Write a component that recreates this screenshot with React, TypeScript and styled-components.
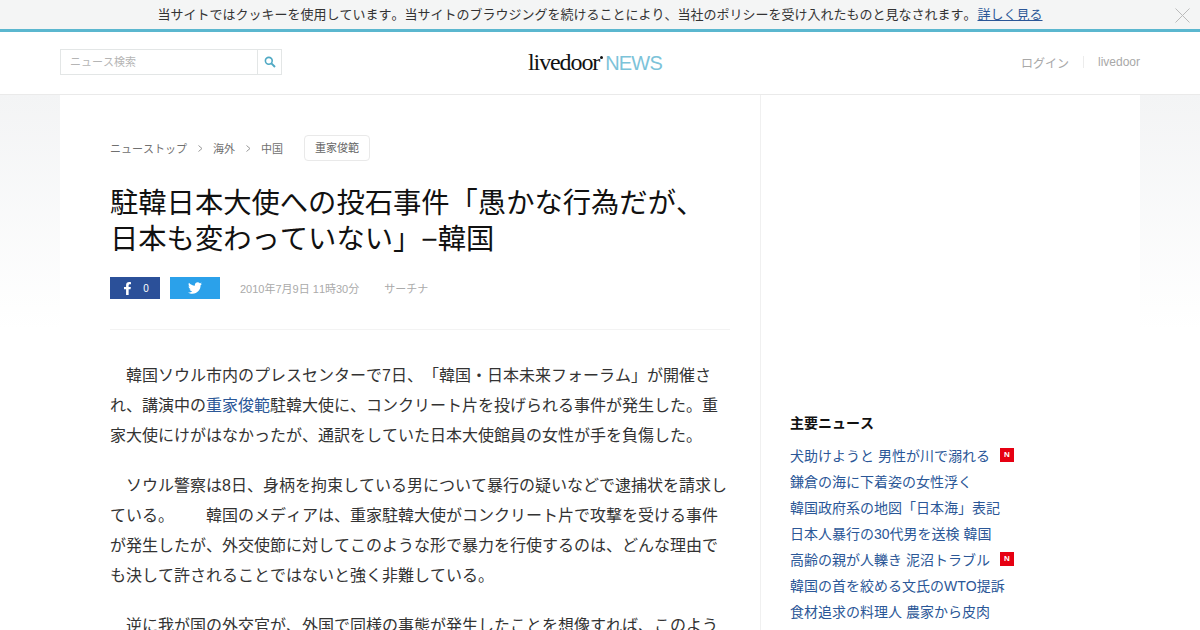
import { createGlobalStyle, styled } from "styled-components";
import { FaFacebookF, FaTwitter } from "react-icons/fa";

const GlobalStyle = createGlobalStyle`
  html, body { margin: 0; padding: 0; height: 630px; overflow: hidden; background: #fff; }
  body {
    font-family: "Liberation Sans", "Noto Sans CJK JP", sans-serif;
    color: #333;
    text-spacing-trim: space-all;
    font-kerning: none;
  }
  a { text-decoration: none; }
`;

const CookieBar = styled.div`
  height: 29px;
  box-sizing: content-box;
  background: #f4f5f5;
  border-bottom: 3px solid #5bb7cf;
  display: flex;
  align-items: center;
  justify-content: center;
  padding-bottom: 0;
  position: relative;
  font-size: 13px;
  line-height: 28px;
  color: #333;
`;

const CookieLink = styled.a`
  color: #2b5797;
  text-decoration: underline;
  margin-left: 1px;
`;

const CloseIcon = styled.svg`
  position: absolute;
  right: 10px;
  top: 8px;
  width: 15px;
  height: 15px;
`;

const Header = styled.header`
  height: 63px;
  box-sizing: border-box;
  border-bottom: 1px solid #eaeaea;
  padding: 0 60px 2px;
  display: grid;
  grid-template-columns: 1fr auto 1fr;
  align-items: center;
  background: #fff;
`;

const SearchBox = styled.div`
  width: 222px;
  height: 26px;
  box-sizing: border-box;
  border: 1px solid #e3e6e6;
  display: flex;
`;

const SearchInput = styled.div`
  flex: 1;
  padding-left: 9px;
  font-size: 11px;
  line-height: 25px;
  color: #b5b5b5;
`;

const SearchButton = styled.div`
  width: 23px;
  border-left: 1px solid #e3e6e6;
  display: flex;
  align-items: center;
  justify-content: center;
`;

const Logo = styled.div`
  display: flex;
  align-items: baseline;
  height: 28px;
  line-height: 28px;
  margin-left: -10px;
`;

const LogoMain = styled.span`
  font-family: "Liberation Serif", serif;
  font-size: 24px;
  letter-spacing: -1.1px;
  color: #111;
`;

const LogoDot = styled.span`
  width: 3px;
  height: 3px;
  border-radius: 50%;
  background: #111;
  align-self: flex-start;
  margin: 8px 2px 0 1px;
`;

const LogoNews = styled.span`
  font-family: "Liberation Sans", sans-serif;
  font-size: 20px;
  letter-spacing: -0.8px;
  color: #7cc3d9;
`;

const HeaderNav = styled.nav`
  display: flex;
  justify-content: flex-end;
  align-items: center;
  font-size: 12px;
  color: #a8a8a8;
`;

const NavItem = styled.a<{ $divided?: boolean }>`
  color: #a8a8a8;
  ${(p) =>
    p.$divided
      ? "margin-left: 14px; padding-left: 14px; border-left: 1px solid #ececec; line-height: 12px;"
      : ""}
`;

const Backdrop = styled.div`
  height: 538px;
  background: linear-gradient(#f3f4f5 0, #fff 235px);
  overflow: hidden;
`;

const Page = styled.div`
  width: 1080px;
  margin: 0 auto;
  background: #fff;
  display: flex;
  height: 100%;
`;

const Article = styled.article`
  width: 701px;
  box-sizing: border-box;
  border-right: 1px solid #f0f0f0;
  padding: 40px 30px 0 50px;
  flex: none;
`;

const Breadcrumb = styled.div`
  display: flex;
  align-items: center;
  height: 26px;
  font-size: 11px;
  color: #707070;
`;

const Chevron = styled.svg`
  width: 5px;
  height: 7px;
  margin: 0 10px 0 11px;
`;

const TagPill = styled.span`
  margin-left: 21px;
  height: 26px;
  box-sizing: border-box;
  border: 1px solid #e9e9e9;
  border-radius: 4px;
  padding: 0 10px;
  line-height: 24px;
  color: #666;
`;

const Title = styled.h1`
  margin: 24px 0 0;
  font-size: 28.3px;
  font-weight: 400;
  line-height: 36px;
  color: #111;
`;

const MetaRow = styled.div`
  display: flex;
  align-items: center;
  margin-top: 20px;
  height: 22px;
  padding-bottom: 30px;
  border-bottom: 1px solid #f3f3f3;
  font-size: 11px;
  color: #aaa;
`;

const ShareButton = styled.a<{ $bg: string }>`
  width: 50px;
  height: 22px;
  background: ${(p) => p.$bg};
  color: #fff;
  display: flex;
  align-items: center;
  justify-content: center;
  margin-right: 10px;
  font-size: 10px;
  gap: 9px;
`;

const MetaDate = styled.span`
  margin-left: 10px;
`;

const MetaSource = styled.span`
  margin-left: 25px;
`;

const Body = styled.div`
  margin-top: 31px;
  padding-right: 3px;
  font-size: 16px;
  line-height: 30px;
  color: #333;
`;

const Paragraph = styled.p`
  margin: 0 0 20px;
  text-indent: 16px;
`;

const BodyLink = styled.a`
  color: #2b5797;
`;

const Side = styled.aside`
  padding: 316px 0 0 29px;
  flex: 1;
`;

const SideTitle = styled.h2`
  margin: 0 0 7px;
  font-size: 14px;
  line-height: 24px;
  font-weight: 700;
  color: #111;
`;

const NewsList = styled.ul`
  margin: 0;
  padding: 0;
  list-style: none;
`;

const NewsItem = styled.li`
  height: 26px;
  display: flex;
  align-items: center;
  font-size: 14px;
  color: #2b5797;
`;

const NewBadge = styled.span`
  width: 14px;
  height: 14px;
  margin-left: 10px;
  margin-top: -1px;
  background: #e60012;
  color: #fff;
  font-size: 8px;
  font-weight: 700;
  line-height: 14px;
  text-align: center;
`;

const news = [
  { text: "犬助けようと 男性が川で溺れる", isNew: true },
  { text: "鎌倉の海に下着姿の女性浮く" },
  { text: "韓国政府系の地図「日本海」表記" },
  { text: "日本人暴行の30代男を送検 韓国" },
  { text: "高齢の親が人轢き 泥沼トラブル", isNew: true },
  { text: "韓国の首を絞める文氏のWTO提訴" },
  { text: "食材追求の料理人 農家から皮肉" },
];

export default function App() {
  return (
    <>
      <GlobalStyle />
      <CookieBar>
        <span>
          当サイトではクッキーを使用しています。当サイトのブラウジングを続けることにより、当社のポリシーを受け入れたものと見なされます。
        </span>
        <CookieLink href="#">詳しく見る</CookieLink>
        <CloseIcon viewBox="0 0 15 15">
          <path d="M0.5 0.5L14.5 14.5M14.5 0.5L0.5 14.5" stroke="#bbb" strokeWidth="1" fill="none" />
        </CloseIcon>
      </CookieBar>
      <Header>
        <SearchBox>
          <SearchInput>ニュース検索</SearchInput>
          <SearchButton>
            <svg width="12" height="12" viewBox="0 0 12 12">
              <circle cx="4.8" cy="4.8" r="3.4" stroke="#4fa9c4" strokeWidth="1.6" fill="none" />
              <path d="M7.4 7.4L11 11" stroke="#4fa9c4" strokeWidth="2" />
            </svg>
          </SearchButton>
        </SearchBox>
        <Logo>
          <LogoMain>livedoor</LogoMain>
          <LogoDot />
          <LogoNews>NEWS</LogoNews>
        </Logo>
        <HeaderNav>
          <NavItem href="#">ログイン</NavItem>
          <NavItem href="#" $divided>livedoor</NavItem>
        </HeaderNav>
      </Header>
      <Backdrop>
        <Page>
          <Article>
            <Breadcrumb>
              ニューストップ
              <Chevron viewBox="0 0 5 7">
                <path d="M0.5 0.5L4 3.5L0.5 6.5" stroke="#999" fill="none" />
              </Chevron>
              海外
              <Chevron viewBox="0 0 5 7">
                <path d="M0.5 0.5L4 3.5L0.5 6.5" stroke="#999" fill="none" />
              </Chevron>
              中国
              <TagPill>重家俊範</TagPill>
            </Breadcrumb>
            <Title>
              駐韓日本大使への投石事件「愚かな行為だが、
              <br />
              日本も変わっていない」−韓国
            </Title>
            <MetaRow>
              <ShareButton href="#" $bg="#2b5099">
                <FaFacebookF size={13} />
                <span>0</span>
              </ShareButton>
              <ShareButton href="#" $bg="#2ba1ea">
                <FaTwitter size={14} />
              </ShareButton>
              <MetaDate>2010年7月9日 11時30分</MetaDate>
              <MetaSource>サーチナ</MetaSource>
            </MetaRow>
            <Body>
              <Paragraph>
                韓国ソウル市内のプレスセンターで7日、「韓国・日本未来フォーラム」が開催され、講演中の
                <BodyLink href="#">重家俊範</BodyLink>
                駐韓大使に、コンクリート片を投げられる事件が発生した。重家大使にけがはなかったが、通訳をしていた日本大使館員の女性が手を負傷した。
              </Paragraph>
              <Paragraph>
                ソウル警察は8日、身柄を拘束している男について暴行の疑いなどで逮捕状を請求している。　　韓国のメディアは、重家駐韓大使がコンクリート片で攻撃を受ける事件が発生したが、外交使節に対してこのような形で暴力を行使するのは、どんな理由でも決して許されることではないと強く非難している。
              </Paragraph>
              <Paragraph>
                逆に我が国の外交官が、外国で同様の事態が発生したことを想像すれば、このよう
              </Paragraph>
            </Body>
          </Article>
          <Side>
            <SideTitle>主要ニュース</SideTitle>
            <NewsList>
              {news.map((n) => (
                <NewsItem key={n.text}>
                  {n.text}
                  {n.isNew && <NewBadge>N</NewBadge>}
                </NewsItem>
              ))}
            </NewsList>
          </Side>
        </Page>
      </Backdrop>
    </>
  );
}
